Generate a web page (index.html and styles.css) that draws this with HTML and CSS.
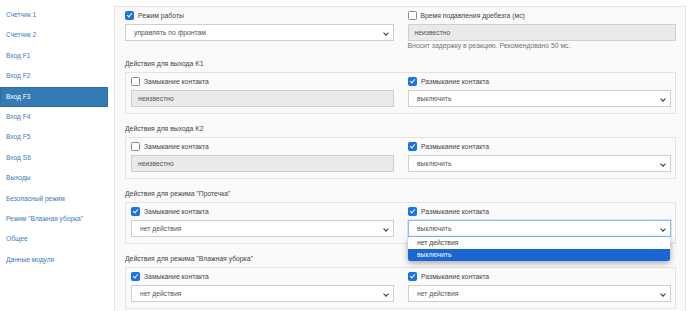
FILE: index.html
```html
<!DOCTYPE html>
<html lang="ru">
<head>
    <meta charset="UTF-8">
    <title>Вход F3</title>
    <link rel="stylesheet" href="styles.css">
</head>
<body>
    <div class="page">
        <nav class="side">
            <a class="nav-item">Счетчик 1</a>
            <a class="nav-item">Счетчик 2</a>
            <a class="nav-item">Вход F1</a>
            <a class="nav-item">Вход F2</a>
            <a class="nav-item active">Вход F3</a>
            <a class="nav-item">Вход F4</a>
            <a class="nav-item">Вход F5</a>
            <a class="nav-item">Вход S6</a>
            <a class="nav-item">Выходы</a>
            <a class="nav-item">Безопасный режим</a>
            <a class="nav-item">Режим "Влажная уборка"</a>
            <a class="nav-item">Общее</a>
            <a class="nav-item">Данные модуля</a>
        </nav>

        <main class="panel">
            <div class="cols">
                <div>
                    <div class="check"><span class="cb on"></span>Режим работы</div>
                    <div class="select">управлять по фронтам<span class="chev"></span></div>
                </div>
                <div>
                    <div class="check"><span class="cb"></span>Время подавления дребезга (мс)</div>
                    <div class="input">неизвестно</div>
                    <div class="help">Вносит задержку в реакцию. Рекомендовано 50 мс.</div>
                </div>
            </div>

            <div class="group-label">Действия для выхода K1</div>
            <div class="box cols">
                <div>
                    <div class="check"><span class="cb"></span>Замыкание контакта</div>
                    <div class="input">неизвестно</div>
                </div>
                <div>
                    <div class="check"><span class="cb on"></span>Размыкание контакта</div>
                    <div class="select">выключить<span class="chev"></span></div>
                </div>
            </div>

            <div class="group-label">Действия для выхода K2</div>
            <div class="box cols">
                <div>
                    <div class="check"><span class="cb"></span>Замыкание контакта</div>
                    <div class="input">неизвестно</div>
                </div>
                <div>
                    <div class="check"><span class="cb on"></span>Размыкание контакта</div>
                    <div class="select">выключить<span class="chev"></span></div>
                </div>
            </div>

            <div class="group-label">Действия для режима "Протечка"</div>
            <div class="box cols">
                <div>
                    <div class="check"><span class="cb on"></span>Замыкание контакта</div>
                    <div class="select">нет действия<span class="chev"></span></div>
                </div>
                <div class="open-wrap">
                    <div class="check"><span class="cb on"></span>Размыкание контакта</div>
                    <div class="select focus">выключить<span class="chev"></span></div>
                    <ul class="dropdown">
                        <li>нет действия</li>
                        <li class="picked">выключить</li>
                    </ul>
                </div>
            </div>

            <div class="group-label">Действия для режима "Влажная уборка"</div>
            <div class="box cols">
                <div>
                    <div class="check"><span class="cb on"></span>Замыкание контакта</div>
                    <div class="select">нет действия<span class="chev"></span></div>
                </div>
                <div>
                    <div class="check"><span class="cb on"></span>Размыкание контакта</div>
                    <div class="select">нет действия<span class="chev"></span></div>
                </div>
            </div>
        </main>
    </div>
</body>
</html>
```

FILE: styles.css
```css
body {
    margin: 0;
    background-color: #ffffff;
    font-family: 'Liberation Sans', Arial, sans-serif;
    font-size: 6.8px;
    color: #444;
}

.page {
    display: flex;
    align-items: flex-start;
}

.side {
    width: 108px;
    padding-top: 5px;
    flex: none;
}

.nav-item {
    display: block;
    height: 20.4px;
    line-height: 20.4px;
    padding-left: 6px;
    color: #3d7abb;
    box-sizing: border-box;
    font-size: 6.6px;
}

.nav-item.active {
    background-color: #337ab7;
    border: 1px solid #2e6da4;
    line-height: 18.4px;
    padding-left: 5px;
    color: #fff;
}

.panel {
    margin: 6px 0 0 6px;
    width: 572px;
    height: 320px;
    box-sizing: border-box;
    border: 1px solid #e3e3e3;
    background-color: #fafafa;
    padding: 2px 9px 0 10px;
}

.cols {
    display: grid;
    grid-template-columns: 1fr 1fr;
    column-gap: 14px;
}

.check {
    display: flex;
    align-items: center;
    height: 12px;
    gap: 4px;
}

.cb {
    width: 7px;
    height: 7px;
    border: 1px solid #8a8a8a;
    border-radius: 1.5px;
    background-color: #fff;
    flex: none;
    position: relative;
}

.cb.on {
    background-color: #1a73e8;
    border-color: #1a73e8;
}

.cb.on::after {
    content: '';
    position: absolute;
    left: 2px;
    top: 0px;
    width: 2px;
    height: 4px;
    border: solid #fff;
    border-width: 0 1.3px 1.3px 0;
    transform: rotate(40deg);
}

.select,
.input {
    margin-top: 3px;
    height: 17px;
    box-sizing: border-box;
    border: 1px solid #cfcfcf;
    line-height: 15px;
    padding-left: 8px;
    color: #555;
    position: relative;
}

.select {
    background-color: #fff;
}

.input {
    background-color: #eaeaea;
    padding-left: 6px;
}

.select.focus {
    border-color: #8cbcf0;
    box-shadow: 0 0 0 1px rgba(100, 160, 230, 0.25);
}

.chev {
    position: absolute;
    right: 5px;
    top: 6px;
    width: 3px;
    height: 3px;
    border: solid #333;
    border-width: 0 1px 1px 0;
    transform: rotate(45deg);
}

.help {
    color: #737373;
    height: 10px;
    line-height: 10px;
}

.group-label {
    margin-top: 7px;
    height: 12px;
    line-height: 12px;
}

.box {
    margin-top: 2px;
    border: 1px solid #e3e3e3;
    padding: 2px 4px 6px 5px;
}

.box + .group-label {
    margin-top: 9px;
}

.open-wrap {
    position: relative;
}

.dropdown {
    position: absolute;
    left: 0;
    top: 32px;
    width: 262px;
    margin: 0;
    padding: 0;
    list-style: none;
    background-color: #fff;
    border-radius: 2px;
    box-shadow: 0 2px 6px rgba(0, 0, 0, 0.35);
    z-index: 5;
    overflow: hidden;
}

.dropdown li {
    height: 12px;
    line-height: 12px;
    padding-left: 9px;
    color: #444;
}

.dropdown li.picked {
    background-color: #1a66d2;
    color: #fff;
}
```
